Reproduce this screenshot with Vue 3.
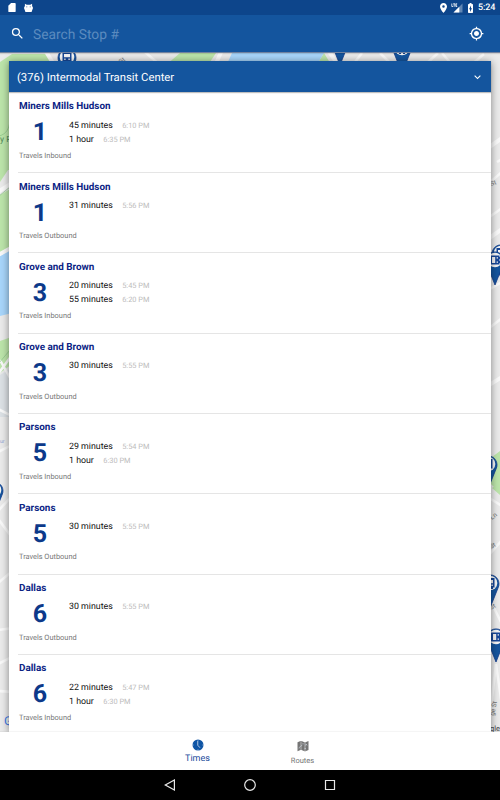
<script setup>
  import { ref } from 'vue';

  const query = ref('');

  const arrivals = [
    { name: 'Miners Mills Hudson', route: 1, direction: 'Inbound', times: [['45 minutes', '6:10 PM'], ['1 hour', '6:35 PM']] },
    { name: 'Miners Mills Hudson', route: 1, direction: 'Outbound', times: [['31 minutes', '5:56 PM']] },
    { name: 'Grove and Brown', route: 3, direction: 'Inbound', times: [['20 minutes', '5:45 PM'], ['55 minutes', '6:20 PM']] },
    { name: 'Grove and Brown', route: 3, direction: 'Outbound', times: [['30 minutes', '5:55 PM']] },
    { name: 'Parsons', route: 5, direction: 'Inbound', times: [['29 minutes', '5:54 PM'], ['1 hour', '6:30 PM']] },
    { name: 'Parsons', route: 5, direction: 'Outbound', times: [['30 minutes', '5:55 PM']] },
    { name: 'Dallas', route: 6, direction: 'Outbound', times: [['30 minutes', '5:55 PM']] },
    { name: 'Dallas', route: 6, direction: 'Inbound', times: [['22 minutes', '5:47 PM'], ['1 hour', '6:30 PM']] },
  ];

  // bus stop pins, x/y is the centre of the round head
  const pins = [
    { x: 67, y: 57 },
    { x: 340, y: 40 },
    { x: 402, y: 48 },
    { x: 501, y: 253 },
    { x: 495, y: 260, turn: -90 },
    { x: 488, y: 464 },
    { x: 490, y: 583 },
    { x: 496, y: 637, turn: -90 },
    { x: -6, y: 490 },
  ];
</script>

<template>
  <div class="screen">
    <div class="status">
      <svg class="status__icon" viewBox="0 0 24 24"><path d="M18 2h-8L4 8v12c0 1.100.9 2 2 2h12c1.100 0 2-.9 2-2V4c0-1.100-.9-2-2-2z" /></svg>
      <svg class="status__icon status__icon--cat" viewBox="0 0 10 10">
        <path d="M1 .3 3 1.500h4L9 .3v3l.8.3v3H9V8c0 1-.8 1.500-1.700 1.500H2.700C1.800 9.500 1 9 1 8V6.600H.2v-3L1 3.300z" />
        <path class="status__face" d="M2.600 3.300h1v1h-1zM6.400 3.300h1v1h-1z" />
      </svg>
      <span class="status__space"></span>
      <svg class="status__icon status__icon--pin" viewBox="5 2 14 20"><path d="M12 2C8.130 2 5 5.130 5 9c0 5.250 7 13 7 13s7-7.750 7-13c0-3.870-3.130-7-7-7zm0 9.500a2.500 2.500 0 1 1 0-5 2.500 2.500 0 0 1 0 5z" /></svg>
      <svg class="status__signal" viewBox="0 0 12 10">
        <path class="status__dim" d="M11.500.5v9h-9z" />
        <path d="M8.300 3.700v5.800H2.500z" />
        <path class="status__lte" d="M.8.5v3h1.300M2.200.8h2M3.200.8v3M6.200.8H4.800v2.700h1.400M4.800 2.100h1.200" />
      </svg>
      <svg class="status__battery" viewBox="7 2 10 20"><path d="M15.670 4H14V2h-4v2H8.330C7.600 4 7 4.600 7 5.330v15.330C7 21.400 7.600 22 8.330 22h7.330c.74 0 1.340-.6 1.340-1.330V5.330C17 4.600 16.400 4 15.670 4zM11 20v-5.500H9L13 7v5.500h2L11 20z" /></svg>
      <span class="status__time">5:24</span>
    </div>

    <header class="toolbar">
      <svg class="toolbar__icon" viewBox="0 0 24 24"><path d="M15.500 14h-.79l-.28-.27A6.471 6.471 0 0 0 16 9.500 6.500 6.500 0 1 0 9.500 16c1.610 0 3.090-.59 4.230-1.570l.27.28v.79l5 4.990L20.490 19l-4.990-5zm-6 0C7.010 14 5 11.990 5 9.500S7.010 5 9.500 5 14 7.010 14 9.500 11.990 14 9.500 14z" /></svg>
      <input v-model="query" class="toolbar__input" type="text" placeholder="Search Stop #">
      <svg class="toolbar__icon" viewBox="0 0 24 24"><path d="M12 8c-2.210 0-4 1.790-4 4s1.790 4 4 4 4-1.790 4-4-1.790-4-4-4zm8.940 3A8.994 8.994 0 0 0 13 3.060V1h-2v2.060A8.994 8.994 0 0 0 3.060 11H1v2h2.060A8.994 8.994 0 0 0 11 20.940V23h2v-2.060A8.994 8.994 0 0 0 20.940 13H23v-2h-2.060zM12 19c-3.870 0-7-3.130-7-7s3.130-7 7-7 7 3.130 7 7-3.130 7-7 7z" /></svg>
    </header>

    <main class="content">
      <svg class="map" viewBox="0 53 500 679">
        <path class="map__land" d="M0 53h500v679H0z" />
        <path class="map__park" d="M0 62 12 54h34l8 12v104H8L0 182zM0 195l20-12v60L0 253zM0 341l20-7v24L0 373zM180 53h36l-8 12h-42zM316 66l8-13 8 13z" />
        <path class="map__water" d="M0 256l20-12v67L0 316zM232 53h92l-8 13h-90z" />
        <path class="map__urban" d="M0 375l20-12v54H0z" />
        <path class="map__park" d="M488 460l12-9v32l-5 5-6-6zM492 488l8-6v13z" />
        <path class="map__road map__road--wide" d="M-2 192 20 178M-2 255 20 243M45 50 56 68M222 50 214 68M328 50 340 68M488 239 502 229M488 148 502 138M486 387 502 377" />
        <path class="map__road" d="M-2 374 12 355M0 360 14 385M-4 408 16 418M-2 452 12 445M-2 511 14 494M-4 516 14 540M-2 583 16 568M-2 630 14 628M-2 664 16 655M-2 691 14 692M145 52l16 14M352 66l10-13M380 53l14 14M424 66l14-13M442 53l10 12M470 66l14-12M497 162 502 159M488 184 502 172M488 218 502 208M488 290 502 282M488 329 502 318M486 496 502 506M488 556 502 540M484 588 502 624M490 716 496 664M496 664 502 706M484 644 502 652" />
        <path class="map__trail" d="M-1 136c8-2 10-8 11-15M-1 196 10 187M-1 363 10 350" />
        <text class="map__label map__label--park" x="0" y="142">y P</text>
        <text class="map__label map__label--blue" x="0" y="443">ur</text>
        <text class="map__label" transform="translate(121 64) rotate(-40)">St</text>
        <text class="map__label" transform="translate(491 186) rotate(-20)">St</text>
        <text class="map__label" transform="translate(492 520) rotate(-38)">Ln</text>
        <text class="map__label" transform="translate(491 549) rotate(-30)">St</text>
        <text class="map__label" transform="translate(491 610) rotate(-30)">St</text>
        <text class="map__label" transform="translate(494 716) rotate(-78)">ge St</text>
        <g v-for="(pin, i) in pins" :key="i" :transform="`translate(${pin.x} ${pin.y})`">
          <path class="pin__body" d="M0 25-8 5A9 9 0 1 1 8 5z" />
          <circle class="pin__head" r="7.300" />
          <path class="pin__bus" :transform="`rotate(${pin.turn || 0})`" d="M-4.500-5h9v9.500h-1.500V6H1V4.500h-2V6h-2V4.500h-1.500zM-3-3v3.200h6V-3zM-2.800 1.600v1.400h1.400V1.600zM1.400 1.600v1.400h1.400V1.600z" />
        </g>
        <text class="map__google" x="4" y="725">G</text>
        <text class="map__attribution" x="490" y="731">gle</text>
      </svg>

      <section class="card">
        <div class="card__header">
          <h1 class="card__title">(376) Intermodal Transit Center</h1>
          <svg class="card__chevron" viewBox="0 0 24 24"><path d="M7.410 7.840 12 12.420l4.590-4.580L18 9.250l-6 6-6-6z" /></svg>
        </div>

        <ul class="list">
          <li v-for="(item, i) in arrivals" :key="i" class="arrival">
            <h2 class="arrival__name">{{ item.name }}</h2>
            <div class="arrival__body">
              <span class="arrival__route">{{ item.route }}</span>
              <div class="arrival__times">
                <p v-for="time in item.times" :key="time[1]" class="arrival__time">
                  {{ time[0] }}<span class="arrival__clock">{{ time[1] }}</span>
                </p>
              </div>
            </div>
            <p class="arrival__direction">Travels {{ item.direction }}</p>
          </li>
        </ul>
      </section>
    </main>

    <nav class="tabs">
      <button class="tab tab--active">
        <svg class="tab__icon" viewBox="0 0 24 24">
          <circle cx="12" cy="12" r="11" />
          <path class="tab__hands" d="M11.500 4v8.500l4.500 5M12 1.500v1.500M12 21v1.500M1.500 12H3M21 12h1.500" />
        </svg>
        Times
      </button>
      <button class="tab">
        <svg class="tab__icon" viewBox="0 0 24 24">
          <path d="M1 4.500 7 2v18l-6 2.500zM9 2l6 2.500v18L9 20zM17 4.500 23 2v18l-6 2.500z" />
          <path d="M6 2h4v18H6zM14 4.500h4v18h-4z" opacity=".55" />
          <path class="tab__hands tab__hands--thin" d="M4 17c0-5 5-3 6-7M12 6v3M17 8l3 3M20 8l-3 3M15 17h3" />
        </svg>
        Routes
      </button>
    </nav>

    <div class="system">
      <svg class="system__icon" viewBox="0 0 12 12"><path d="M10.400 1v10L1.300 6z" /></svg>
      <svg class="system__icon" viewBox="0 0 12 12"><circle cx="6" cy="6" r="5.300" /></svg>
      <svg class="system__icon" viewBox="0 0 12 12"><path d="M1.500 1.500h9v9h-9z" /></svg>
    </div>
  </div>
</template>

<style>
  body {
    margin: 0;
  }
</style>

<style scoped>
  .screen {
    display: flex;
    flex-direction: column;
    width: 500px;
    height: 800px;
    overflow: hidden;
    font-family: Roboto, "Liberation Sans", sans-serif;
    text-rendering: geometricPrecision;
    background: #fff;
  }

  h1, h2, p, ul {
    margin: 0;
    padding: 0;
    font-weight: 400;
    list-style: none;
  }

  .status {
    display: flex;
    align-items: center;
    flex: none;
    box-sizing: border-box;
    height: 15px;
    padding: 0 5px 0 6px;
    background: #0d458b;
    color: #fff;
    fill: #fff;
  }

  .status__icon {
    width: 12px;
    height: 11px;
  }

    .status__icon--cat {
      width: 9px;
      height: 10px;
      margin-left: 6px;
    }

    .status__icon--pin {
      width: 7px;
      height: 10px;
    }

  .status__face {
    fill: #0d458b;
  }

  .status__space {
    flex: 1;
  }

  .status__signal {
    width: 12px;
    height: 10px;
    margin-left: 4px;
  }

  .status__dim {
    opacity: .35;
  }

  .status__lte {
    fill: none;
    stroke: #fff;
    stroke-width: .8;
  }

  .status__battery {
    width: 7px;
    height: 10px;
    margin: 0 4px 0 4px;
  }

  .status__time {
    padding-top: 2px;
    font-size: 9px;
    font-weight: 500;
    line-height: 13px;
    width: 17px;
    white-space: nowrap;
    letter-spacing: -.1px;
  }

  .toolbar {
    position: relative;
    z-index: 1;
    display: flex;
    align-items: center;
    flex: none;
    box-sizing: border-box;
    height: 38px;
    padding: 0 16px 0 10px;
    background: #14559e;
    border-bottom: 1px solid #70819f;
    box-shadow: 0 1px 1px rgba(0, 0, 0, .12);
  }

  .toolbar__icon {
    flex: none;
    width: 15px;
    height: 15px;
    fill: #fff;
  }

  .toolbar__input {
    flex: 1;
    min-width: 0;
    margin-left: 8px;
    padding: 2px 0 0;
    border: 0;
    outline: 0;
    background: none;
    color: #fff;
    font: 13.800px Roboto, sans-serif;
    text-rendering: geometricPrecision;
  }

  .toolbar__input::placeholder {
    color: #5b8bbf;
  }

  .content {
    position: relative;
    box-sizing: border-box;
    height: 679px;
    flex: none;
    padding: 8px 9px 0;
    overflow: hidden;
  }

  /* the map lies under the card */
  .map {
    position: absolute;
    inset: 0;
    width: 500px;
    height: 679px;
  }

  .map__land { fill: #ebebeb; }
  .map__park { fill: #bce5aa; }
  .map__water { fill: #a8d6fb; }
  .map__urban { fill: #dce1e5; }

  .map__road {
    fill: none;
    stroke: #fafafa;
    stroke-width: 2.500;
  }

    .map__road--wide {
      stroke-width: 4;
    }

  .map__trail {
    fill: none;
    stroke: #83bd82;
    stroke-width: .6;
  }

  .map__label {
    font-size: 6.500px;
    fill: #777;
  }

    .map__label--park {
      font-size: 8.500px;
      fill: #4f8958;
    }

    .map__label--blue {
      font-size: 5px;
      fill: #8b9ed1;
    }

  .pin__body { fill: #14559e; stroke: #123b8c; stroke-width: .8; }
  .pin__head { fill: #f6f6f6; }
  .pin__bus { fill: #174899; fill-rule: evenodd; }

  .map__google {
    font-size: 12px;
    fill: #3978e7;
  }

  .map__attribution {
    font-size: 7.500px;
    fill: #444;
  }

  .card {
    position: relative;
    height: 671px;
    background: #fff;
    box-shadow: 0 1px 8px rgba(0, 0, 0, .45);
  }

  .card__header {
    position: relative;
    display: flex;
    align-items: center;
    justify-content: space-between;
    box-sizing: border-box;
    height: 31px;
    padding: 1px 7px 0 8px;
    background: #14559e;
    box-shadow: 0 1px 1px rgba(0, 0, 0, .25);
  }

  .card__title {
    padding-top: 1px;
    color: #fff;
    font-size: 11.300px;
    line-height: 30px;
  }

  .card__chevron {
    width: 13px;
    height: 13px;
    fill: #fff;
  }

  .list {
    padding: .8px 0 0 9px;
  }

  .arrival {
    box-sizing: border-box;
    height: 80.300px;
    padding: 8.500px 0 0 1px;
    border-bottom: 1px solid #e5e5e5;
  }

    .arrival:last-child {
      border-bottom: 0;
    }

  .arrival__name {
    color: #0b2484;
    font-size: 9.900px;
    font-weight: 700;
    line-height: 12px;
  }

  .arrival__body {
    display: flex;
    height: 37.500px;
  }

  .arrival__route {
    width: 42px;
    margin-right: 8px;
    padding-top: 5px;
    color: #0c398a;
    font-size: 25px;
    font-weight: 700;
    line-height: 30px;
    text-align: center;
  }

  .arrival__times {
    padding-top: 5.300px;
  }

  .arrival__time {
    color: #111;
    font-size: 8.800px;
    line-height: 13.100px;
    white-space: nowrap;
  }

  .arrival__clock {
    margin-left: 9.500px;
    color: #bbb;
    font-size: 7.400px;
  }

  .arrival__direction {
    color: #777;
    font-size: 7.400px;
    line-height: 10px;
  }

  .tabs {
    display: flex;
    justify-content: center;
    gap: 35px;
    flex: none;
    height: 38px;
    position: relative;
    background: #fff;
    box-shadow: 0 -1px 1px rgba(0, 0, 0, .04);
  }

  .tab {
    display: flex;
    flex-direction: column;
    align-items: center;
    width: 70px;
    padding: 8px 0 0;
    border: 0;
    background: none;
    color: #757575;
    fill: #757575;
    font: 7.500px/17px Roboto, sans-serif;
    text-rendering: geometricPrecision;
  }

    .tab--active {
      padding-top: 7px;
      color: #1a4c9c;
      fill: #0f55a5;
      font-size: 9px;
    }

  .tab__icon {
    width: 12px;
    height: 12px;
  }

  .tab__hands {
    fill: none;
    stroke: #d8e2ef;
    stroke-width: 1.600;
  }

    .tab__hands--thin {
      stroke-width: 1.100;
    }

  .system {
    display: flex;
    align-items: center;
    justify-content: center;
    gap: 68px;
    flex: none;
    height: 30px;
    background: #000;
  }

  .system__icon {
    width: 12px;
    height: 12px;
    fill: none;
    stroke: #e8e8e8;
    stroke-width: 1.200;
  }
</style>
